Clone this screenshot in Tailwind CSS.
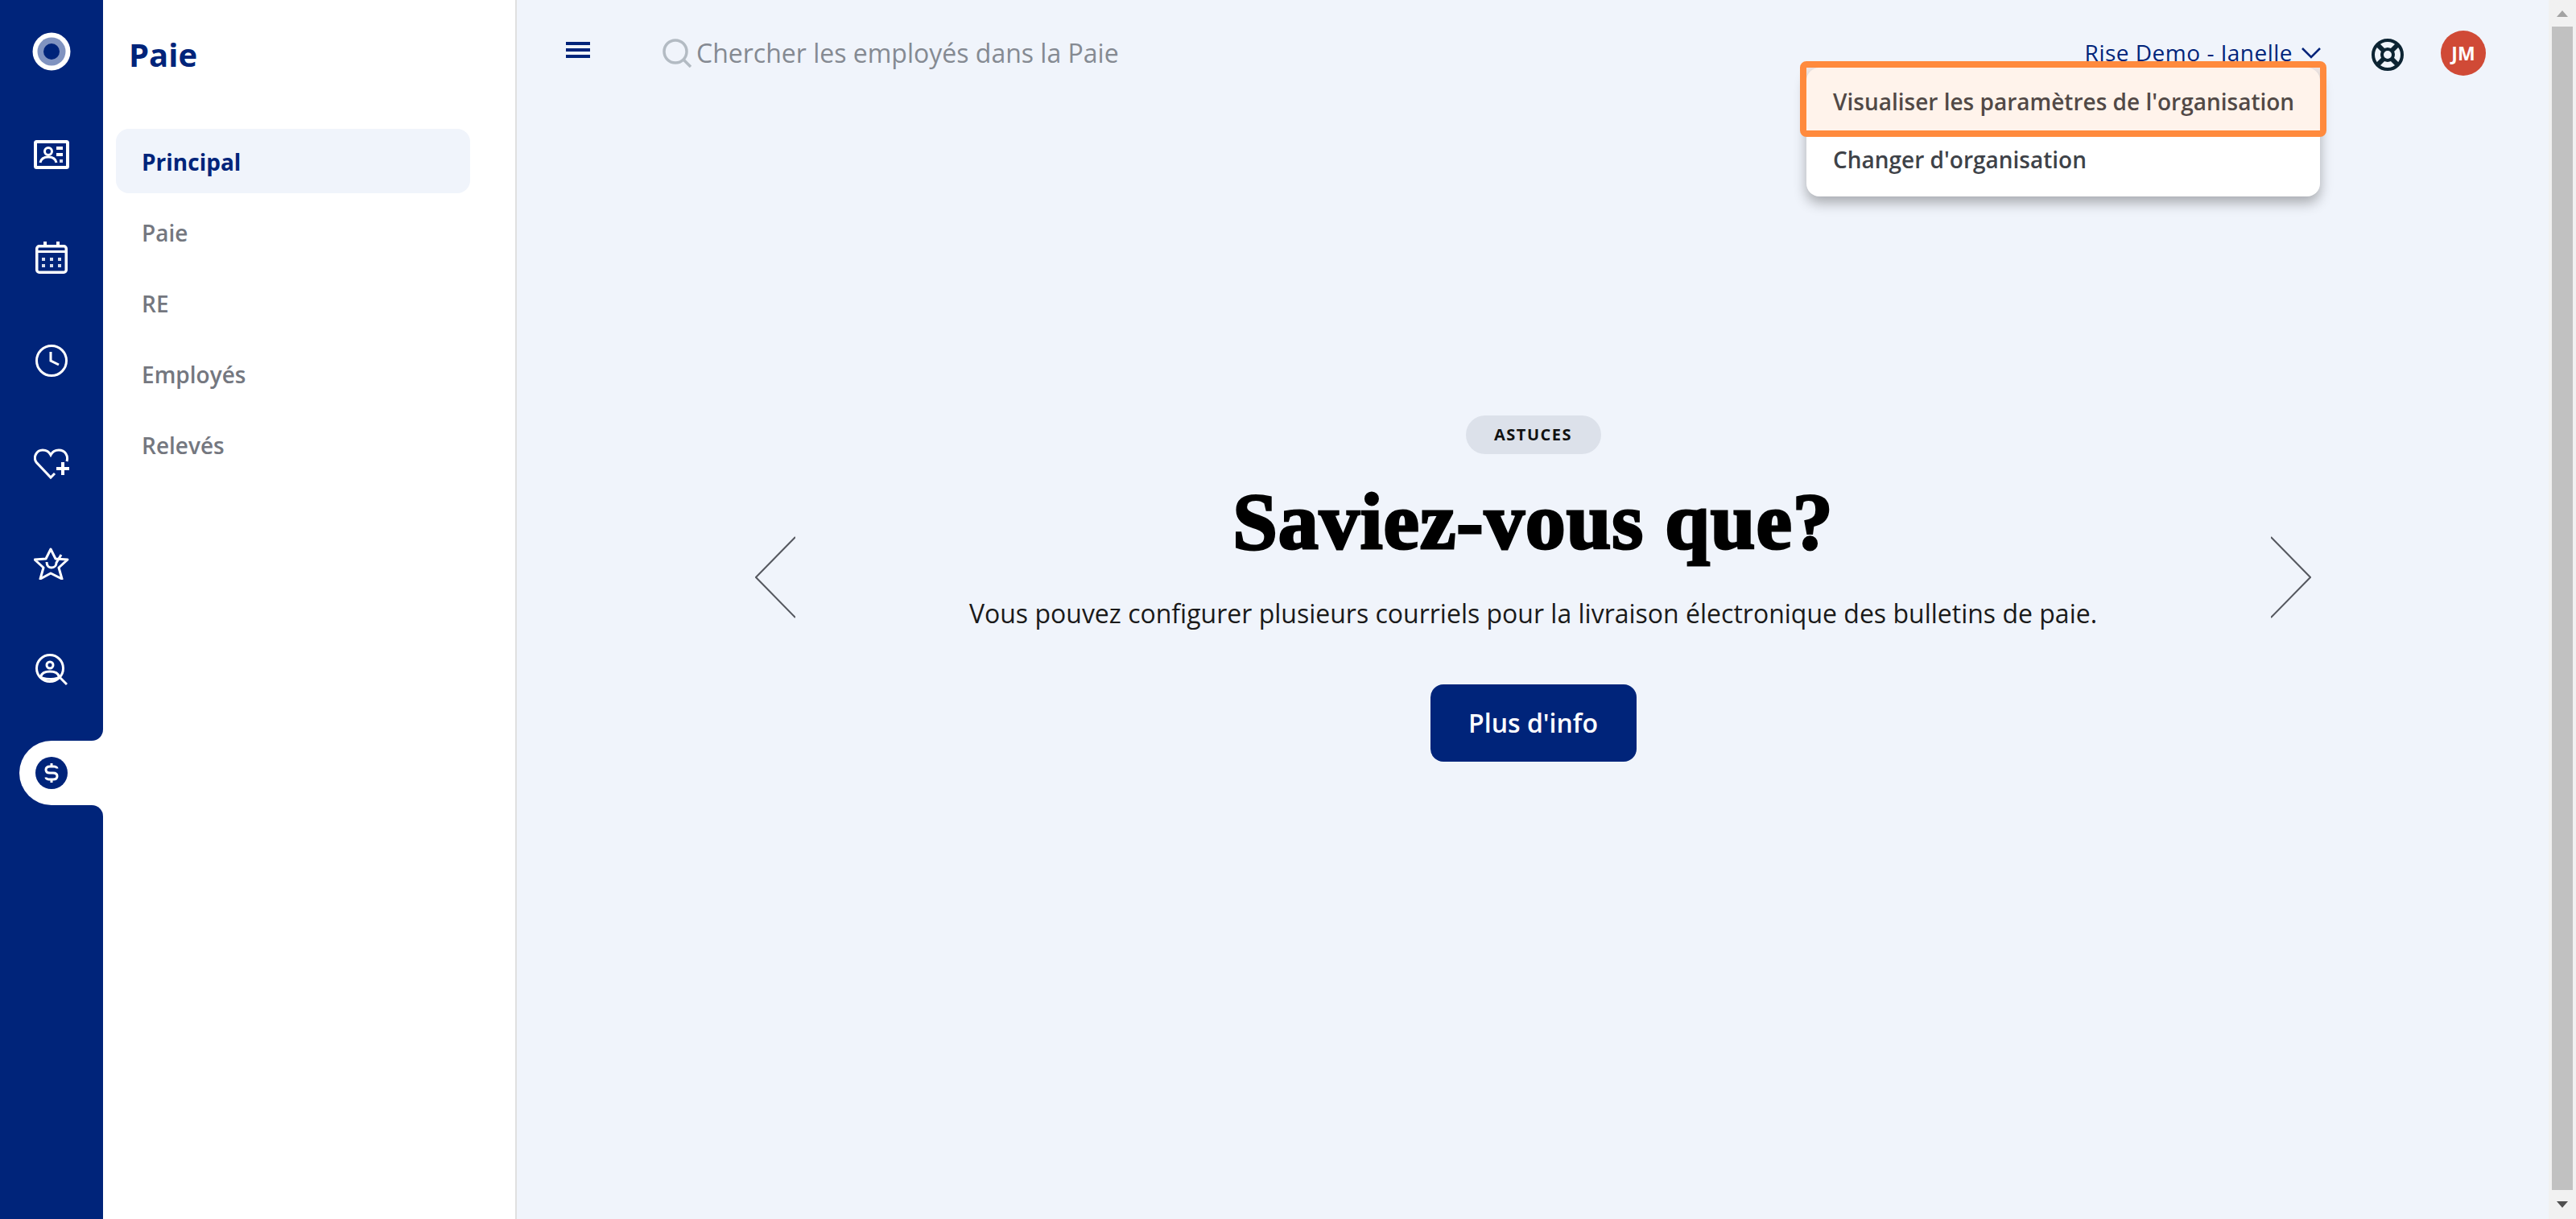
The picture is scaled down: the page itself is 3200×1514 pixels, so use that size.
<!DOCTYPE html>
<html lang="fr">
<head>
    <meta charset="UTF-8">
    <title>Paie - Principal</title>
    <script src="https://cdn.jsdelivr.net/npm/@tailwindcss/browser@4"></script>
</head>
<body class="bg-[#f0f4fb] font-['Open_Sans',sans-serif] overflow-hidden">
    <div class="flex h-[1514px] w-[3200px]">
        <!-- rail -->
        <nav class="w-32 shrink-0 bg-[#00247a] flex flex-col">
            <div class="h-32 flex items-center justify-center">
                <svg class="w-12 h-12" viewBox="0 0 48 48"><circle cx="24" cy="24" r="23.5" fill="#fff"/><circle cx="24" cy="24" r="17.5" fill="#8093c0"/><circle cx="24" cy="24" r="10" fill="#00247a"/></svg>
            </div>
            <div class="h-32 flex items-center justify-center">
                <svg class="w-11 h-9" viewBox="0 0 44 36" fill="none" stroke="#fff"><rect x="2" y="2" width="40" height="32" rx="1.500" stroke-width="4"/><circle cx="18" cy="14" r="4.500" stroke-width="3"/><path d="M8 28c1-5 5-7 10-7s9 2 10 7" stroke-width="3"/><path d="M28 10h8M28 18h8" stroke-width="4"/><path d="M32 26h4" stroke-width="4" stroke="#d5dbea"/></svg>
            </div>
            <div class="h-32 flex items-center justify-center">
                <svg class="w-10 h-10" viewBox="0 0 40 40" fill="none" stroke="#fff" stroke-width="3.500"><rect x="1.750" y="5.750" width="36.500" height="32.500" rx="3"/><path d="M2 12.500h36" stroke-width="3"/><path d="M12 0v6M28 0v6" stroke-width="4"/><path d="M8 22h4M18 22h4M28 22h4M8 30h4M18 30h4M28 30h4" stroke-width="4" stroke="#d5dbea"/></svg>
            </div>
            <div class="h-32 flex items-center justify-center">
                <svg class="w-10 h-10" viewBox="0 0 40 40" fill="none" stroke="#fff" stroke-width="3"><circle cx="20" cy="20" r="18.500"/><path d="M19 9v11l10 5"/></svg>
            </div>
            <div class="h-32 flex items-center justify-center">
                <svg class="w-11 h-10" viewBox="0 0 44 40" fill="none" stroke="#fff" stroke-width="3"><path d="M26 32l-5 5L3 18C-1 12 3 3 11 3c4 0 8 2 10 6 2-4 6-6 10-6 8 0 12 7 10 14"/><path d="M36 18v16M28 26h16" stroke-width="4"/></svg>
            </div>
            <div class="h-32 flex items-start justify-center pt-[40px]">
                <svg class="w-11 h-10" viewBox="0 0 44 40" fill="none" stroke="#fff" stroke-width="3" stroke-linejoin="round"><path d="M21 2l6 12 15 1-11 10 4 14-14-7-13 7 4-14L1 15l14-1z"/><path d="M16 18c0 5 3 7 6 7 4 0 6-3 6-6l6-10"/></svg>
            </div>
            <div class="h-32 flex items-start justify-center pt-[44px]">
                <svg class="w-10 h-10" viewBox="0 0 40 40" fill="none" stroke="#fff" stroke-width="3"><circle cx="18" cy="18" r="16.500"/><circle cx="18" cy="14" r="4"/><path d="M7 28c1-5 6-6 11-6s10 1 11 6M5 28c4 4 22 5 26 0M30 29l9 9"/></svg>
            </div>
            <!-- active tab -->
            <div class="relative mt-6 ml-6 h-20 bg-white rounded-l-[40px] flex items-center pl-5">
                <div class="absolute right-0 top-[-14px] w-3.5 h-3.5 bg-white"><div class="w-full h-full bg-[#00247a] rounded-br-[14px]"></div></div>
                <div class="absolute right-0 bottom-[-14px] w-3.5 h-3.5 bg-white"><div class="w-full h-full bg-[#00247a] rounded-tr-[14px]"></div></div>
                <svg class="w-10 h-10" viewBox="0 0 40 40" fill="none"><circle cx="20" cy="20" r="20" fill="#00247a"/><path d="M27 14.500c0-1.500-2-2.500-4-2.500h-5c-3 0-5 1.500-5 4s2 4 5 4h4c3 0 5 1.500 5 4s-2 4-5 4h-5c-2 0-4-1-4-2.500M20 8v4M20 28v4" stroke="#fff" stroke-width="3"/></svg>
            </div>
        </nav>

        <!-- sidebar -->
        <aside class="w-[514px] shrink-0 bg-white border-r-2 border-[#e0e0e0] pl-4 pr-[56px]">
            <h2 class="h-[136px] pl-4 flex items-center text-[40px] font-bold text-[#00247a]">Paie</h2>
            <ul class="mt-6 flex flex-col gap-2 text-[28px] font-semibold text-[#74777f]">
                <li class="h-20 flex items-center px-8 pt-0.5 rounded-2xl bg-[#f0f4fb] font-bold text-[#00247a]">Principal</li>
                <li class="h-20 flex items-center px-8 pt-0.5">Paie</li>
                <li class="h-20 flex items-center px-8 pt-0.5">RE</li>
                <li class="h-20 flex items-center px-8 pt-0.5">Employés</li>
                <li class="h-20 flex items-center px-8 pt-0.5">Relevés</li>
            </ul>
        </aside>

        <!-- main -->
        <main class="relative flex-1 flex flex-col">
            <header class="h-[132px] flex items-center pl-[61px] pr-[78px]">
                <svg class="w-[30px] h-5 mb-[8px]" viewBox="0 0 30 20" fill="#00247a"><rect width="30" height="4"/><rect y="8" width="30" height="4"/><rect y="16" width="30" height="4"/></svg>
                <svg class="ml-[90px] w-9 h-9" viewBox="0 0 36 36" fill="none" stroke="#b3bbc3" stroke-width="3.500"><circle cx="16" cy="16" r="14"/><path d="M26 26l9 9"/></svg>
                <span class="ml-1.5 text-[32px] text-[#858a92]">Chercher les employés dans la Paie</span>
                <span class="ml-auto mb-[2px] text-[28px] tracking-[0.5px] text-[#00247a]">Rise Demo - Janelle</span>
                <svg class="ml-[10px] w-[26px] h-4" viewBox="0 0 26 16" fill="none" stroke="#00247a" stroke-width="2.500"><path d="M2 2l11 11L24 2"/></svg>
                <svg class="ml-[62px] mt-1 w-10 h-10" viewBox="0 0 40 40" fill="none" stroke="#0d2433" stroke-width="4"><circle cx="20" cy="20" r="18"/><circle cx="20" cy="20" r="7"/><path d="M7 7l8 8M33 7l-8 8M7 33l8-8M33 33l-8-8" stroke-width="6"/></svg>
                <div class="ml-[46px] w-14 h-14 rounded-full bg-[#d04a36] flex items-center justify-center text-white text-[23px] font-bold">JM</div>
            </header>

            <section class="flex-1 flex items-start pt-[384px] pl-[296px] pr-[295px]">
                <svg class="mt-[150px] w-[50px] h-[102px] shrink-0" viewBox="0 0 50 102" fill="none" stroke="#55585f" stroke-width="2"><path d="M50 1L1 51l49 50"/></svg>
                <div class="flex-1 flex flex-col items-center">
                    <span class="h-12 w-[168px] rounded-full bg-[#dce1ea] flex items-center justify-center text-[20px] font-bold tracking-[1.5px] text-[#111]">ASTUCES</span>
                    <h1 class="mt-[24px] text-[100px] leading-[120px] tracking-[1px] font-bold text-black font-['Liberation_Serif',serif] [-webkit-text-stroke:3px_black]">Saviez-vous que?</h1>
                    <p class="mt-[32px] text-[32px] leading-[44px] text-[#1a1a1a]">Vous pouvez configurer plusieurs courriels pour la livraison électronique des bulletins de paie.</p>
                    <button class="mt-[66px] h-24 w-[256px] rounded-2xl bg-[#00247a] text-white text-[32px] font-semibold">Plus d'info</button>
                </div>
                <svg class="mt-[150px] w-[50px] h-[102px] shrink-0" viewBox="0 0 50 102" fill="none" stroke="#55585f" stroke-width="2"><path d="M0 1l49 50L0 101"/></svg>
            </section>

            <!-- org menu -->
            <div class="absolute left-[1602px] top-[84px] w-[638px] py-2 bg-white rounded-2xl shadow-[0_8px_16px_rgba(0,0,0,0.3)] text-[28px] font-semibold text-[#3e4248]">
                <div class="h-[72px] flex items-center pl-[33px] pb-1">Visualiser les paramètres de l'organisation</div>
                <div class="h-[72px] flex items-center pl-[33px] pb-1">Changer d'organisation</div>
                <div class="absolute left-[-8px] right-[-8px] top-[-8px] h-[94px] border-8 border-[#ff8a3d] rounded-lg bg-[#ff8a3d]/10"></div>
            </div>
        </main>

        <!-- scrollbar -->
        <div class="w-[34px] shrink-0 bg-[#f1f1f1] flex flex-col items-center">
            <div class="h-[33px] flex items-center"><div class="w-0 h-0 border-x-[7px] border-x-transparent border-b-[8px] border-b-[#a3a3a3]"></div></div>
            <div class="flex-1 w-[26px] bg-[#c1c1c1]"></div>
            <div class="h-9 flex items-center"><div class="w-0 h-0 border-x-[7px] border-x-transparent border-t-[8px] border-t-[#505050]"></div></div>
        </div>
    </div>
</body>
</html>
